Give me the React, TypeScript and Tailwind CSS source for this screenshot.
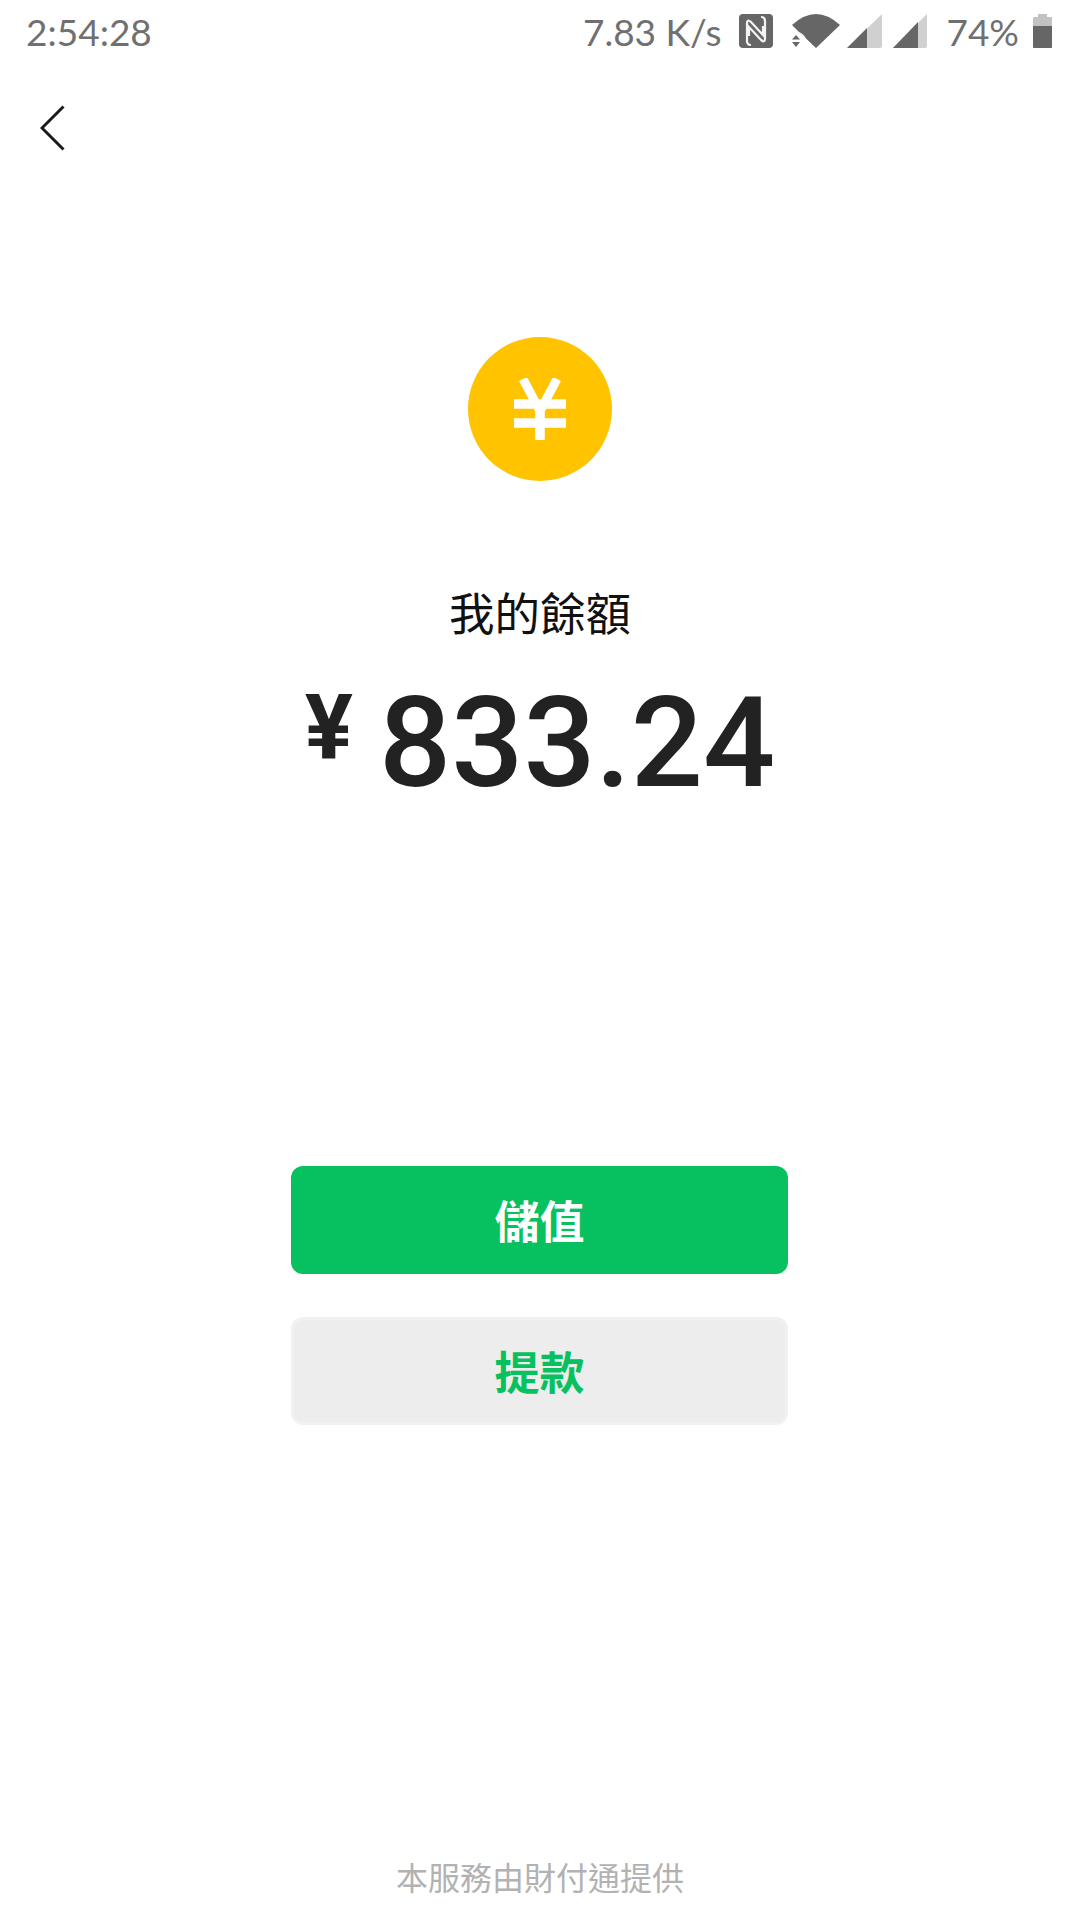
export default function App() {
  const cjk = { fontFamily: '"Noto Sans CJK TC", "Noto Sans CJK SC", sans-serif' };
  return (
    <div className="flex h-[1920px] w-[1080px] flex-col items-center overflow-hidden bg-white" style={cjk}>
      <div className="flex h-[62px] w-full items-center pl-[26px] pr-[28px] font-['Lato',sans-serif] text-[37px] font-normal leading-none text-[#707070]">
        <span>2:54:28</span>
        <span className="ml-auto">7.83 K/s</span>
        <svg className="ml-[18px]" width="34" height="34" viewBox="0 0 34 34">
          <rect width="34" height="34" rx="4" fill="#666666" />
          <path d="M12 31 Q8 31 8 27 V9 Q8 5 12 8 L24 21 V12" fill="none" stroke="#f4f4f4" strokeWidth="2.2" />
          <path d="M22 3 Q26 3 26 7 V25 Q26 29 22 26 L10 13 V22" fill="none" stroke="#f4f4f4" strokeWidth="2.2" />
        </svg>
        <svg className="ml-[19px]" width="48" height="34" viewBox="0 0 48 34">
          <path d="M0 11 Q24 -11 48 11 L24 34 L14 24.5 Q12 20 7 18 Z" fill="#666666" />
          <path d="M4 21 L8 25.5 H0 Z M0 28 H8 L4 33 Z" fill="#666666" />
        </svg>
        <svg className="ml-[7px]" width="35" height="34" viewBox="0 0 35 34">
          <path d="M35 0 V32 Q35 34 33 34 H0 Z" fill="#d0d0d0" />
          <path d="M20 14 V34 H0 Z" fill="#666666" />
        </svg>
        <svg className="ml-[11px]" width="34" height="34" viewBox="0 0 34 34">
          <path d="M34 0 V32 Q34 34 32 34 H0 Z" fill="#d0d0d0" />
          <path d="M25 8 V34 H0 Z" fill="#666666" />
        </svg>
        <span className="ml-[19px]">74%</span>
        <svg className="ml-[14px]" width="19" height="34" viewBox="0 0 19 34">
          <path d="M5 0 H14 V3 H18 Q19 3 19 4 V33 Q19 34 18 34 H1 Q0 34 0 33 V4 Q0 3 1 3 H5 Z" fill="#c2c2c2" />
          <path d="M0 12 H19 V33 Q19 34 18 34 H1 Q0 34 0 33 Z" fill="#666666" />
        </svg>
      </div>

      <div className="flex h-[132px] w-full items-center pl-[40px]">
        <svg width="25" height="46" viewBox="0 0 25 46">
          <path d="M23.5 1.5 L2 23 L23.5 44.5" fill="none" stroke="#1a1a1a" strokeWidth="3" />
        </svg>
      </div>

      <div className="mr-[1px] mt-[143px] flex h-[144px] w-[144px] items-center justify-center rounded-full bg-[#ffc300]">
        <svg width="54" height="62" viewBox="0 0 54 62">
          <path d="M10 1 L27 33 L44 1" fill="none" stroke="#fff" strokeWidth="9" />
          <path d="M1 26 H53 M1 45 H53 M27 30 V62" fill="none" stroke="#fff" strokeWidth="9.5" />
        </svg>
      </div>

      <div className="mt-[100px] text-[45.5px] leading-[60px] text-[#111111]">我的餘額</div>

      <div className="mt-[27px] flex h-[150px] items-start text-[#222222]">
        <span className="mr-[26px] mt-[16px] font-['Roboto',sans-serif] text-[90px] font-bold leading-[90px]">¥</span>
        <span className="font-['Roboto',sans-serif] text-[127px] font-medium leading-[150px]">833.24</span>
      </div>

      <button className="mr-[1px] mt-[348px] flex h-[108px] w-[497px] items-center justify-center rounded-[12px] bg-[#07c160] text-[45px] font-bold text-white">儲值</button>
      <button className="mr-[1px] mt-[43px] flex h-[108px] w-[497px] items-center justify-center rounded-[12px] border-[3px] border-[#f1f1f1] bg-[#ededed] text-[45px] font-bold text-[#07c160]">提款</button>

      <div className="mt-auto mb-[21px] text-[32px] leading-[46px] text-[#b2b2b2]">本服務由財付通提供</div>
    </div>
  );
}
